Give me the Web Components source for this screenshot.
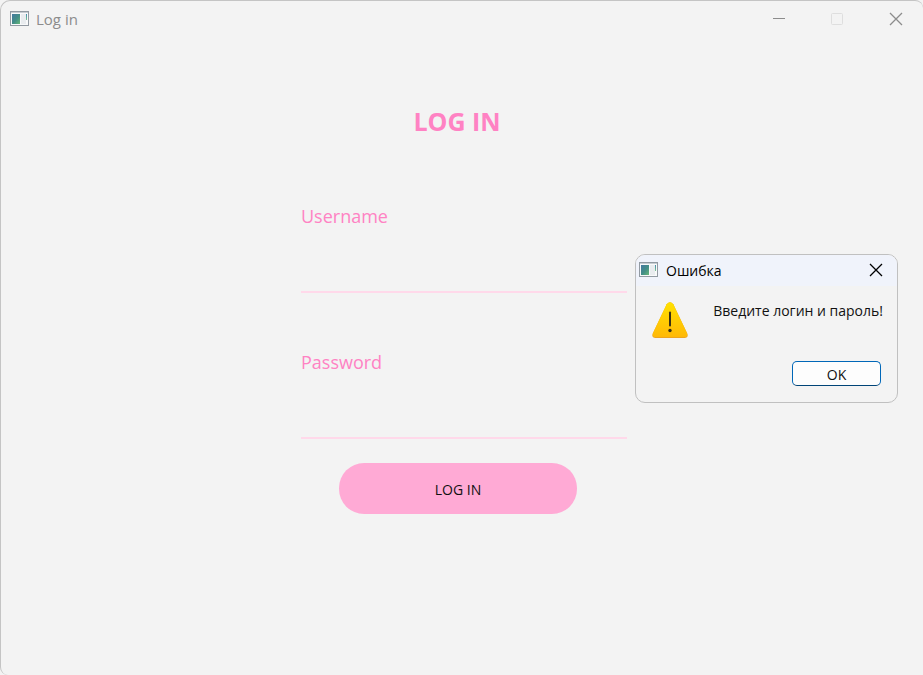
<!DOCTYPE html>
<html lang="en">
<head>
<meta charset="utf-8">
<title>Log in</title>
<style>
html, body { height: 100%; margin: 0; }
body { background: #f3f3f3; font-family: "Open Sans", "Noto Sans", sans-serif; overflow: hidden; }
</style>
</head>
<body>
<app-window>
  <login-form></login-form>
  <message-dialog slot="overlay" heading="Ошибка" lang="ru">Введите логин и пароль!</message-dialog>
</app-window>

<script>
class AppIcon extends HTMLElement {
  constructor() {
    super();
    this.attachShadow({ mode: "open" }).innerHTML = `
      <style>:host { display: block; flex: none; width: 19px; height: 16px; } svg { display: block; }</style>
      <svg width="19" height="15" viewBox="0 0 19 15" aria-hidden="true">
        <defs><linearGradient id="g" x1="0" y1="0" x2="1" y2="1"><stop offset="0" stop-color="#4478a0"/><stop offset=".55" stop-color="#438f86"/><stop offset="1" stop-color="#68b879"/></linearGradient>
        <linearGradient id="h" x1="0" y1="0" x2="0" y2="1"><stop offset="0" stop-color="#438bb0"/><stop offset="1" stop-color="#7cc58f"/></linearGradient></defs>
        <rect x=".5" y=".5" width="18" height="14" fill="#f8f9fa" stroke="#929aa2"/>
        <path d="M1 1.5h17" stroke="#c6ccd1"/>
        <rect x="2" y="3" width="8" height="10" fill="url(#g)"/>
        <rect x="11" y="3" width="5" height="10" fill="#e9ecef"/>
        <rect x="16" y="3" width="1" height="6" fill="url(#h)"/>
      </svg>`;
  }
}
customElements.define("app-icon", AppIcon);

class CloseButton extends HTMLElement {
  constructor() {
    super();
    this.attachShadow({ mode: "open" }).innerHTML = `
      <style>
        :host { display: block; }
        button { display: block; padding: 0; border: 0; background: none; color: inherit; width: 14px; height: 14px; }
        svg { display: block; }
      </style>
      <button type="button" aria-label="Close"><svg width="14" height="14" viewBox="0 0 14 14"><path d="M1 1l12 12M13 1L1 13" stroke="currentColor" stroke-width="1.3" fill="none"/></svg></button>`;
  }
}
customElements.define("close-button", CloseButton);

class AppWindow extends HTMLElement {
  constructor() {
    super();
    this.attachShadow({ mode: "open" }).innerHTML = `
      <style>
        :host { display: flex; flex-direction: column; position: relative; box-sizing: border-box; min-height: 100vh;
          border: 1px solid #c4c4c4; border-width: 1px 0 0 1px; border-radius: 10px 8px 0 8px; background: #f3f3f3; }
        header { display: flex; align-items: center; gap: 7px; height: 36px; padding: 0 20px 0 9px; color: #8c8c8c; font-size: 15px; line-height: 20px; }
        .title { flex: 1; }
        .controls { display: flex; align-items: center; gap: 45px; }
        .controls button { display: block; padding: 0; border: 0; background: none; width: 14px; height: 14px; }
        svg { display: block; }
        main { display: flex; justify-content: center; padding-left: 4px; }
      </style>
      <header>
        <app-icon></app-icon>
        <span class="title">Log in</span>
        <div class="controls">
          <button type="button" aria-label="Minimize"><svg width="14" height="14" viewBox="0 0 14 14"><path d="M2 6.5h12" stroke="#8c8c8c"/></svg></button>
          <button type="button" aria-label="Maximize" disabled><svg width="14" height="14" viewBox="0 0 14 14"><rect x="1.5" y="1.5" width="11" height="11" rx="1" fill="none" stroke="#dedede"/></svg></button>
          <close-button></close-button>
        </div>
      </header>
      <main><slot></slot></main>
      <slot name="overlay"></slot>`;
  }
}
customElements.define("app-window", AppWindow);

class LineField extends HTMLElement {
  connectedCallback() {
    if (this.shadowRoot) return;
    this.attachShadow({ mode: "open" }).innerHTML = `
      <style>
        :host { display: block; }
        label { display: block; font-size: 18px; line-height: 30px; color: #ff82c3; }
        input { display: block; box-sizing: border-box; width: 100%; height: 62px; padding: 16px 0 0; border: 0;
          border-bottom: 2px solid #ffd9ea; border-radius: 0; background: none; outline: none; font: inherit; color: #222; }
      </style>
      <label for="field"></label>
      <input id="field">`;
    this.shadowRoot.querySelector("label").textContent = this.getAttribute("label");
    this.shadowRoot.querySelector("input").type = this.getAttribute("type");
  }
}
customElements.define("line-field", LineField);

class LoginForm extends HTMLElement {
  constructor() {
    super();
    this.attachShadow({ mode: "open" }).innerHTML = `
      <style>
        :host { display: block; flex: 0 1 326px; padding-top: 66px; }
        form { display: flex; flex-direction: column; }
        h1 { margin: 0 0 62px; padding-right: 14px; text-align: center; font-size: 25px; line-height: 36px; font-weight: 700; color: #ff82c3; }
        line-field + line-field { margin-top: 54px; }
        .actions { display: flex; justify-content: center; padding-right: 12px; margin-top: 24px; }
        .actions button { width: 238px; height: 51px; padding: 2px 0 0; border: 0; border-radius: 25px; background: #ffaad5; color: #111; font: inherit; font-size: 14px; }
      </style>
      <form>
        <h1>LOG IN</h1>
        <line-field label="Username" type="text"></line-field>
        <line-field label="Password" type="password"></line-field>
        <div class="actions"><button type="button">LOG IN</button></div>
      </form>`;
  }
}
customElements.define("login-form", LoginForm);

class MessageDialog extends HTMLElement {
  connectedCallback() {
    if (this.shadowRoot) return;
    this.attachShadow({ mode: "open" }).innerHTML = `
      <style>
        :host { display: block; position: absolute; top: 253px; right: 25px; box-sizing: border-box; width: 263px; overflow: hidden;
          border: 1px solid #c0c0c0; border-radius: 10px; background: #f3f3f3; color: #111; font-size: 14px; }
        header { display: flex; align-items: center; gap: 8px; height: 30px; padding: 0 14px 1px 3px; background: #f0f3fb; color: #000; }
        .title { flex: 1; padding-top: 1px; line-height: 19px; }
        .body { display: flex; justify-content: space-between; padding: 15px 14px 0 15px; }
        .body svg { display: block; flex: none; }
        p { margin: 0; line-height: 20px; white-space: nowrap; }
        footer { display: flex; justify-content: flex-end; padding: 22px 16px 16px; }
        footer button { width: 89px; height: 25px; padding: 2px 0 0; border: 1px solid #0067b8; border-bottom-color: #004477; border-radius: 5px; background: #fdfdfd; color: #111; font: inherit; }
      </style>
      <section role="alertdialog" aria-labelledby="title" aria-describedby="message">
        <header><app-icon></app-icon><span class="title" id="title"></span><close-button></close-button></header>
        <div class="body">
          <svg width="38" height="38" viewBox="0 0 38 38" aria-hidden="true">
            <defs><linearGradient id="w" x1="0" y1="0" x2="0" y2="1"><stop offset="0" stop-color="#ffe100"/><stop offset="1" stop-color="#ffb907"/></linearGradient></defs>
            <path d="M15.7 3.2Q19 -.8 22.3 3.2L36.2 32.5Q37.8 36.8 33.5 37H4.5Q.2 36.8 1.8 32.5Z" fill="#eda51d"/>
            <path d="M15.7 3.2Q19 -.8 22.3 3.2L36 32Q37.2 35.8 33.5 36H4.5Q.8 35.8 2 32Z" fill="url(#w)"/>
            <path d="M19 11.5v13" stroke="#382f16" stroke-width="2" stroke-linecap="round"/><circle cx="19" cy="29.5" r="1.7" fill="#382f16"/>
          </svg>
          <p id="message"><slot></slot></p>
        </div>
        <footer><button type="button">OK</button></footer>
      </section>`;
    this.shadowRoot.querySelector(".title").textContent = this.getAttribute("heading");
  }
}
customElements.define("message-dialog", MessageDialog);
</script>
</body>
</html>
